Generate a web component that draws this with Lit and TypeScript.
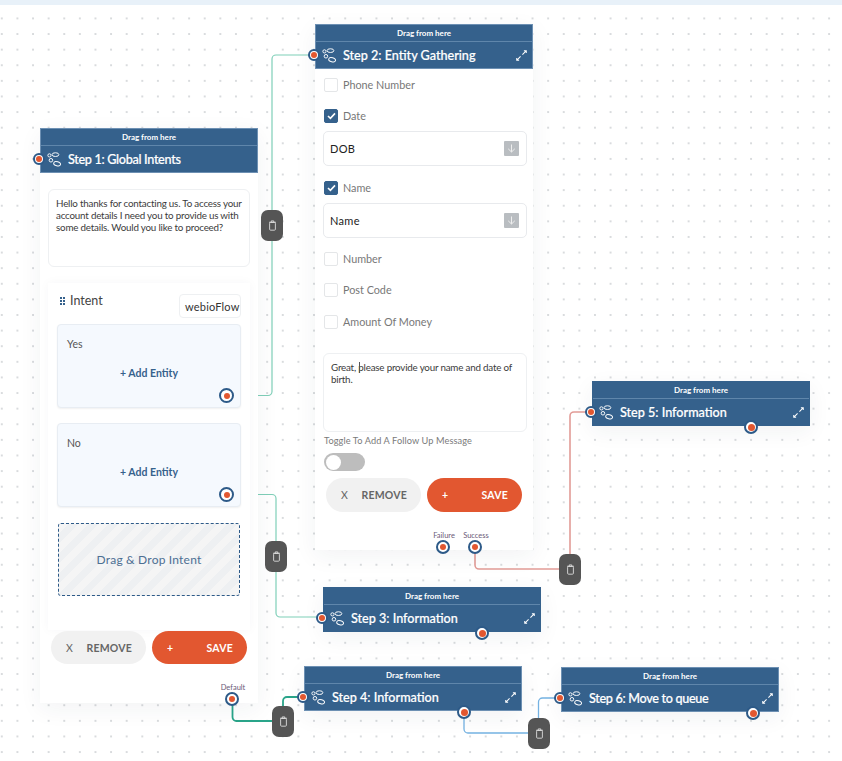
import { LitElement, html, css, svg } from "lit";
import { customElement, property } from "lit/decorators.js";

const stepsIcon = html`<svg class="steps" viewBox="0 0 16 16" fill="none" stroke="currentColor" stroke-width="1">
  <circle cx="2.6" cy="3.6" r="1.7"/><ellipse cx="9" cy="2.8" rx="3.6" ry="2"/>
  <circle cx="4.2" cy="8.8" r="1.9"/><ellipse cx="10.8" cy="12.6" rx="3.7" ry="2.2" transform="rotate(15 10.8 12.6)"/></svg>`;

const expandIcon = html`<svg class="expand" viewBox="0 0 12 12" fill="none" stroke="#fff" stroke-width="1.1">
  <path d="M7 5 11 1M8.6 .8h2.6v2.6" /><path d="M5 7 1 11M3.4 11.2H.8V8.6"/></svg>`;

const trashIcon = html`<svg class="trash-i" viewBox="0 0 10 12" fill="none" stroke="#dcdcdc" stroke-width="1">
  <rect x="1.8" y="2.6" width="6.4" height="8.6" rx="1"/><path d="M1.2 2.4h7.6M3.6 2.2V.9h2.8v1.3"/></svg>`;

@customElement("flow-node")
class FlowNode extends LitElement {
  @property() label = "";
  @property({ type: Boolean }) expand = true;
  @property({ type: Boolean }) plain = false;
  @property({ type: Boolean }) tight = false;
  @property() bottom = "";
  static styles = css`
    :host { display: block; background: #fff; box-shadow: 0 6px 22px rgba(40,50,70,.06); position: relative; }
    .hd { background: #35618c; color: #fff; border: 1px solid #6d90b3; position: relative; }
    .hd.plain { border-color: #35618c; }
    .drag { height: 16px; display: flex; align-items: center; justify-content: center; font-size: 8px; font-weight: 700; border-bottom: 1px solid #5f86ab; }
    .title { height: 26px; display: flex; align-items: center; padding: 0 5px 0 6px; font-size: 12.6px; font-weight: 500; -webkit-text-stroke: .2px #fff; }
    .title.tight span { letter-spacing: -.3px; }
    .steps { width: 15px; height: 15px; margin-right: 6px; flex: none; }
    .expand { width: 11px; height: 11px; margin-left: auto; }
    .port { position: absolute; box-sizing: border-box; border-radius: 50%; background: #fff; border: 2px solid #2d5a88; display: flex; align-items: center; justify-content: center; }
    .port i { display: block; border-radius: 50%; background: #e25730; }
    .left { width: 12px; height: 12px; left: -7px; top: 25px; }
    .left i { width: 6px; height: 6px; }
    .bot { width: 14px; height: 14px; top: 39px; }
    .bot i { width: 7px; height: 7px; }
  `;
  render() {
    return html`<div class="hd ${this.plain ? "plain" : ""}">
        <div class="drag">Drag from here</div>
        <div class="title ${this.tight ? "tight" : ""}">${stepsIcon}<span>${this.label}</span>${this.expand ? expandIcon : ""}</div>
      </div>
      <span class="port left"><i></i></span>
      ${this.bottom ? html`<span class="port bot" style="left:${this.bottom}px"><i></i></span>` : ""}
      <slot></slot>`;
  }
}

@customElement("app-root")
class AppRoot extends LitElement {
  static styles = css`
    :host { display: block; width: 842px; height: 761px; overflow: hidden; font-family: Lato, "Noto Sans", sans-serif; color: #444; }
    .canvas { position: relative; width: 842px; height: 761px; background-color: #fff;
      background-image: radial-gradient(circle, #ced1d4 0.6px, transparent 1px); background-size: 15.62px 15.62px; background-position: -6px -5px; }
    .top { position: absolute; left: 0; top: 0; right: 0; height: 5px; background: #e8f1f9; }
    .lines { position: absolute; left: 0; top: 0; width: 842px; height: 761px; }
    flow-node { position: absolute; width: 218px; }
    .trash { position: absolute; width: 22px; height: 31px; border-radius: 7px; background: #555; display: flex; align-items: center; justify-content: center; }
    .trash-i { width: 9px; height: 11px; }

    .b1 { box-sizing: border-box; height: 530px; padding: 16px 8px 0; display: flex; flex-direction: column; position: relative; }
    .ta { box-sizing: border-box; border: 1px solid #eef0f2; border-radius: 6px; padding: 7px 4px 7px 7px; font-size: 9.8px; letter-spacing: -.2px; line-height: 12px; color: #3b3b3b; flex: none; position: relative; }
    .b1 .ta { height: 78px; width: 202px; }
    .intent { flex: none; margin-top: 16px; width: 202px; height: 347px; box-sizing: border-box; padding: 11px 9px 0; box-shadow: 0 0 10px rgba(40,50,70,.04); display: flex; flex-direction: column; }
    .ihd { flex: none; display: flex; justify-content: space-between; height: 30px; font-size: 12.5px; color: #444; }
    .ihd .nm { display: flex; align-items: flex-start; gap: 5px; padding: 0 0 0 3px; line-height: 14px; }
    .dots { display: grid; grid-template-columns: 2px 2px; gap: 1px 1px; margin-top: 3px; }
    .dots b { width: 2px; height: 2px; background: #35618c; display: block; }
    .wf { box-sizing: border-box; width: 62px; height: 24px; border: 1px solid #eef0f2; border-radius: 4px; font-size: 11px; padding: 0 0 0 5px; display: flex; align-items: center; overflow: hidden; white-space: nowrap; letter-spacing: .2px; color: #333; }
    .ent { flex: none; box-sizing: border-box; height: 84px; border-radius: 4px; background: #f5f9fe; border: 1px solid #e8edf3; box-shadow: 0 1px 2px rgba(0,0,0,.06); padding: 13px 9px; font-size: 10.5px; color: #555; position: relative; margin-bottom: 15px; }
    .add { position: absolute; left: 0; right: 0; top: 42px; text-align: center; font-size: 10.5px; font-weight: 700; color: #35618c; }
    .ip { position: absolute; right: 6px; bottom: 4px; width: 15px; height: 15px; border: 2px solid #2d5a88; border-radius: 50%; box-sizing: border-box; background: #fff; display: flex; align-items: center; justify-content: center; }
    .ip i { width: 6px; height: 6px; background: #e25730; border-radius: 50%; }
    .dropz { flex: none; box-sizing: border-box; height: 73px; margin: 1px 1px 0; border: 1px dashed #2d5a88; border-radius: 3px; display: flex; align-items: center; justify-content: center; font-size: 12px; color: #4d6f93; letter-spacing: .2px;
      background: repeating-linear-gradient(135deg, #f5f5f5 0 7px, #eef0f2 7px 14px); }
    .btns { display: flex; gap: 6px; }
    .b1 .btns { margin: 1px 3px 0; }
    .btn { box-sizing: border-box; width: 95px; height: 33px; border-radius: 17px; display: flex; align-items: center; justify-content: space-between; padding: 0 14px 0 15px; font-size: 10.5px; font-weight: 700; letter-spacing: .2px; }
    .btn.rm { background: #f1f1f1; color: #666; }
    .btn.rm span:first-child { font-weight: 400; }
    .btn.sv { background: #e25730; color: #fff; }
    .pl { position: absolute; font-size: 7.5px; color: #6b5a78; transform: translateX(-50%); }
    .op { position: absolute; width: 14px; height: 14px; border: 2px solid #2d5a88; border-radius: 50%; box-sizing: border-box; background: #fff; display: flex; align-items: center; justify-content: center; transform: translateX(-50%); }
    .op i { width: 6px; height: 6px; background: #e25730; border-radius: 50%; }

    .b2 { box-sizing: border-box; height: 481px; padding: 9px 6px 0 8px; position: relative; }
    .ck { display: flex; align-items: center; gap: 5px; height: 14px; font-size: 10.8px; color: #777; margin-left: 1px; }
    .ck span:first-child { box-sizing: border-box; width: 14px; height: 14px; border: 1px solid #e4e6e8; border-radius: 2px; display: flex; align-items: center; justify-content: center; }
    .ck span + span { margin-top: -2px; }
    .ck .on { background: #35618c; border-color: #35618c !important; }
    .ck svg { width: 9px; height: 8px; }
    .sel { box-sizing: border-box; height: 35px; width: 204px; border: 1px solid #e8eaed; border-radius: 5px; display: flex; align-items: center; justify-content: space-between; padding: 0 7px 0 6px; font-size: 11px; color: #222; letter-spacing: .3px; margin-top: 8px; }
    .sq { width: 15px; height: 15px; background: #b9bdc1; border-radius: 1px; display: flex; align-items: center; justify-content: center; }
    .sq svg { width: 9px; height: 9px; }
    .mt14 { margin-top: 14px; } .mt15 { margin-top: 15px; } .mt17 { margin-top: 17px; } .mt18 { margin-top: 18px; }
    .b2 .ta { margin-top: 24px; height: 79px; width: 204px; }
    .caret { position: absolute; left: 35px; top: 8px; width: 1px; height: 11px; background: #555; }
    .tl { margin: 3px 0 0 1px; font-size: 9.2px; color: #7a7a7a; height: 11px; line-height: 11px; letter-spacing: .1px; }
    .tg { margin: 7px 0 0 1px; width: 41px; height: 18px; border-radius: 9px; background: #bdbdbd; padding: 1.5px; box-sizing: border-box; }
    .tg i { display: block; width: 15px; height: 15px; border-radius: 50%; background: #fff; }
    .b2 .btns { margin: 7px 0 0 3px; }
    .b2 .btn { height: 34px; }
  `;

  lines() {
    const t = "#7fcfb8", d = "#2aa58a", r = "#e29c97", b = "#74b2e2";
    const p = [
      ["M258 395.5H268a4 4 0 0 0 4-4V59a4 4 0 0 1 4-4H310", t, 1.2],
      ["M258 494.5H272a4 4 0 0 1 4 4V613a4 4 0 0 0 4 4H318", t, 1.2],
      ["M232.5 705V717a4 4 0 0 0 4 4H272M283 706V701a4 4 0 0 1 4-4H300", d, 1.8],
      ["M475 553V565a4 4 0 0 0 4 4H559M570 554V416a4 4 0 0 1 4-4H587", r, 1.6],
      ["M464 717V729a4 4 0 0 0 4 4H528M538.5 718V702a4 4 0 0 1 4-4H556", b, 1.3],
    ] as const;
    return html`<svg class="lines" viewBox="0 0 842 761" fill="none">
      ${p.map(([dd, c, w]) => svg`<path d=${dd} stroke=${c} stroke-width=${w}/>`)}
    </svg>`;
  }

  pos(x: number, y: number) { return `left:${x}px;top:${y}px`; }

  check(label: string, on: boolean, cls = "") {
    return html`<div class="ck ${cls}"><span class=${on ? "on" : ""}>${on ? html`<svg viewBox="0 0 9 8" fill="none" stroke="#fff" stroke-width="1.6"><path d="M1 4l2.4 2.4L8 1.4"/></svg>` : ""}</span><span>${label}</span></div>`;
  }
  select(v: string) {
    return html`<div class="sel"><span>${v}</span><span class="sq"><svg viewBox="0 0 9 9" fill="none" stroke="#eee" stroke-width="1"><path d="M4.5 .5v7.4M1.2 4.8l3.3 3.2 3.3-3.2"/></svg></span></div>`;
  }
  buttons() {
    return html`<div class="btns"><div class="btn rm"><span>X</span><span>REMOVE</span></div><div class="btn sv"><span>+</span><span>SAVE</span></div></div>`;
  }
  entity(t: string) {
    return html`<div class="ent">${t}<div class="add">+ Add Entity</div><span class="ip"><i></i></span></div>`;
  }

  render() {
    const trash: [number, number][] = [[261, 210], [265, 541], [272, 706], [559, 554], [528, 718]];
    return html`<div class="canvas">
      <div class="top"></div>
      ${this.lines()}

      <flow-node label="Step 1: Global Intents" tight .expand=${false} style=${this.pos(40, 128)}>
        <div class="b1">
          <div class="ta">Hello thanks for contacting us. To access your account details I need you to provide us with some details. Would you like to proceed?</div>
          <div class="intent">
            <div class="ihd"><div class="nm"><span class="dots"><b></b><b></b><b></b><b></b><b></b><b></b></span>Intent</div><div class="wf">webioFlow</div></div>
            ${this.entity("Yes")}
            ${this.entity("No")}
            <div class="dropz">Drag &amp; Drop Intent</div>
          </div>
          ${this.buttons()}
          <span class="pl" style="left:193px;top:510px">Default</span>
          <span class="op" style="left:192px;top:519px"><i></i></span>
        </div>
      </flow-node>

      <flow-node label="Step 2: Entity Gathering" style=${this.pos(315, 24)}>
        <div class="b2">
          ${this.check("Phone Number", false)}
          ${this.check("Date", true, "mt17")}
          ${this.select("DOB")}
          ${this.check("Name", true, "mt15")}
          ${this.select("Name")}
          ${this.check("Number", false, "mt14")}
          ${this.check("Post Code", false, "mt17")}
          ${this.check("Amount Of Money", false, "mt18")}
          <div class="ta">Great, please provide your name and date of birth.<span class="caret"></span></div>
          <div class="tl">Toggle To Add A Follow Up Message</div>
          <div class="tg"><i></i></div>
          ${this.buttons()}
          <span class="pl" style="left:129px;top:462px">Failure</span>
          <span class="pl" style="left:161px;top:462px">Success</span>
          <span class="op" style="left:128px;top:471px"><i></i></span>
          <span class="op" style="left:160px;top:471px"><i></i></span>
        </div>
      </flow-node>

      <flow-node label="Step 3: Information" plain bottom="152" style=${this.pos(323, 587)}></flow-node>
      <flow-node label="Step 4: Information" bottom="153" style=${this.pos(304, 666)}></flow-node>
      <flow-node label="Step 5: Information" plain bottom="152" style=${this.pos(592, 381)}></flow-node>
      <flow-node label="Step 6: Move to queue" tight bottom="185" style=${this.pos(561, 667)}></flow-node>

      ${trash.map(([x, y]) => html`<div class="trash" style=${this.pos(x, y)}>${trashIcon}</div>`)}
    </div>`;
  }
}
